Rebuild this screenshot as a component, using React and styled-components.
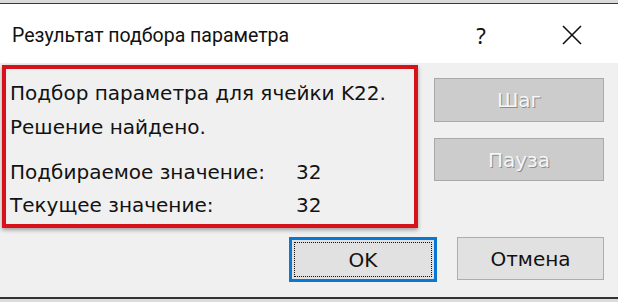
import React from "react";
import styled, { createGlobalStyle } from "styled-components";

const GlobalStyle = createGlobalStyle`
  * { box-sizing: border-box; }
  html, body { margin: 0; padding: 0; background: #f0f0f0; }
`;

const Window = styled.div`
  width: 618px;
  height: 302px;
  display: flex;
  flex-direction: column;
  overflow: hidden;
  background: #f0f0f0;
`;

const TopEdge = styled.div`
  height: 4px;
  background: #d9d9d9;
  border-bottom: 1px solid #3a3a3a;
`;

const TitleBar = styled.div`
  height: 59px;
  background: #ffffff;
  display: flex;
  align-items: center;
  padding: 3px 26px 0 12px;
  font-family: Roboto, "Noto Sans", sans-serif;
  font-size: 19.5px;
  color: #111;
`;

const Title = styled.div`
  flex: 1;
`;

const TitleButton = styled.div`
  width: 40px;
  margin-left: ${(p) => p.gap || 0}px;
  display: flex;
  justify-content: center;
  align-items: center;
  font-family: "Noto Sans", sans-serif;
  font-size: 22px;
`;

const Body = styled.div`
  flex: 1;
  padding: 2px 14px 0 2px;
  display: flex;
  flex-direction: column;
`;

const Main = styled.div`
  display: flex;
  gap: 16px;
`;

const ResultBox = styled.div`
  width: 416px;
  height: 163px;
  border: 4px solid #d8121b;
  box-shadow: 0 2px 4px rgba(0, 0, 0, 0.35);
  padding: 7px 0 0 4px;
  font-family: "DejaVu Sans", Verdana, sans-serif;
  font-size: 20px;
  color: #121212;
`;

const Line = styled.div`
  line-height: 34px;
  white-space: nowrap;
`;

const ValueGrid = styled.div`
  margin-top: 11px;
  display: grid;
  grid-template-columns: 286px 1fr;
  grid-auto-rows: 33px;
  align-items: center;
  white-space: nowrap;
`;

const ButtonColumn = styled.div`
  padding-top: 13px;
  display: flex;
  flex-direction: column;
  gap: 16px;
`;

const Button = styled.button`
  width: ${(p) => p.w || 170}px;
  height: ${(p) => p.h || 44}px;
  font-family: "DejaVu Sans", Verdana, sans-serif;
  font-size: 20px;
  color: #111;
  background: #e1e1e1;
  border: 1px solid #adadad;
  border-radius: 0;
  padding: 0;
`;

const DisabledButton = styled(Button)`
  background: #cccccc;
  border-color: #a9a9a9;
  color: #f6f6f6;
  text-shadow: 1px 1px 0 #8c8c8c;
`;

const DefaultButton = styled(Button)`
  border: 3px solid #0a78d0;
  outline: 1px dotted #111;
  outline-offset: -6px;
`;

const Footer = styled.div`
  margin-top: 9px;
  display: flex;
  justify-content: flex-end;
  gap: 20px;
`;

const BottomEdge = styled.div`
  height: 5px;
  border-top: 2px solid #333;
  background: #dcdcdc;
`;

const CloseIcon = () => (
  <svg width="22" height="22" viewBox="0 0 22 22">
    <path d="M2 2 L20 20 M20 2 L2 20" stroke="#111" strokeWidth="1.6" fill="none" />
  </svg>
);

export default function App() {
  return (
    <>
      <GlobalStyle />
      <Window>
        <TopEdge />
        <TitleBar>
          <Title>Результат подбора параметра</Title>
          <TitleButton>?</TitleButton>
          <TitleButton gap={51}>
            <CloseIcon />
          </TitleButton>
        </TitleBar>
        <Body>
          <Main>
            <ResultBox>
              <Line>Подбор параметра для ячейки K22.</Line>
              <Line>Решение найдено.</Line>
              <ValueGrid>
                <span>Подбираемое значение:</span>
                <span>32</span>
                <span>Текущее значение:</span>
                <span>32</span>
              </ValueGrid>
            </ResultBox>
            <ButtonColumn>
              <DisabledButton disabled>Шаг</DisabledButton>
              <DisabledButton disabled h={43}>Пауза</DisabledButton>
            </ButtonColumn>
          </Main>
          <Footer>
            <DefaultButton w={148} h={45}>OK</DefaultButton>
            <Button w={147} h={43}>Отмена</Button>
          </Footer>
        </Body>
        <BottomEdge />
      </Window>
    </>
  );
}
